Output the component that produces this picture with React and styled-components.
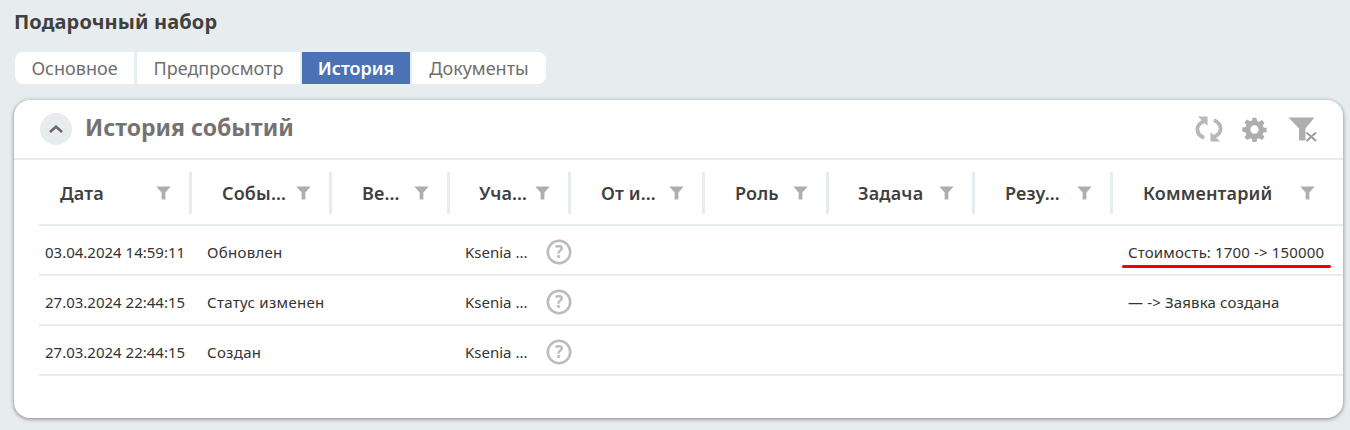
import React from "react";
import styled, { createGlobalStyle } from "styled-components";

const Global = createGlobalStyle`
  html, body { margin: 0; padding: 0; background: #e7ecef; }
  body { font-family: "Noto Sans", "Open Sans", sans-serif; color: #3f3f3f; width: 1350px; height: 430px; overflow: hidden; }
`;
const Page = styled.div`
  padding: 9px 7px 0 14px;
  display: flex;
  flex-direction: column;
`;
const Title = styled.h1`
  margin: 0;
  font-size: 20px;
  line-height: 25px;
  font-weight: 700;
  letter-spacing: 0.12px;
  color: #41403f;
`;
const Tabs = styled.div`
  display: flex;
  margin: 18px 0 16px 1px;
  height: 32px;
`;
const Tab = styled.div`
  display: flex;
  align-items: center;
  justify-content: center;
  width: ${p => p.$w}px;
  margin-right: ${p => p.$gap || 0}px;
  font-size: 18px;
  font-weight: ${p => (p.$active ? 600 : 400)};
  background: ${p => (p.$active ? "#4b72b5" : "#fff")};
  color: ${p => (p.$active ? "#fff" : "#706e6d")};
  border-radius: ${p => (p.$first ? "8px 0 0 8px" : p.$last ? "0 8px 8px 0" : "0")};
`;
const Card = styled.section`
  width: 1329px;
  height: 318px;
  background: #fff;
  border-radius: 16px;
  box-shadow: 0 1px 4px rgba(0, 0, 0, 0.45);
  position: relative;
  overflow: hidden;
`;
const CardHead = styled.header`
  height: 58px;
  border-bottom: 2px solid #e7ecef;
  display: flex;
  align-items: center;
  padding: 0 26px;
`;
const Collapse = styled.button`
  width: 32px;
  height: 32px;
  border: 0;
  padding: 0;
  border-radius: 50%;
  background: #e7ecef;
  display: flex;
  align-items: center;
  justify-content: center;
  margin-right: 13px;
`;
const CardTitle = styled.h2`
  margin: 0 0 5px;
  font-size: 23px;
  font-weight: 700;
  color: #757372;
  flex: 1;
`;
const Tools = styled.div`
  display: flex;
  align-items: center;
  margin-right: -1px;
`;
const ToolSlot = styled.span`
  display: flex;
  margin-left: ${p => p.$gap || 0}px;
`;
const Table = styled.div`
  margin-left: 25px;
`;
const columns = "153px 140px 118px 121px 134px 124px 146px 138px 1fr";
const HeadRow = styled.div`
  display: grid;
  grid-template-columns: ${columns};
  height: 64px;
  border-bottom: 2px solid #e7ecef;
  align-items: center;
`;
const HeadCell = styled.div`
  height: 42px;
  margin-top: 2px;
  border-right: ${p => (p.$last ? "0" : "3px solid #e7ecef")};
  display: flex;
  align-items: center;
  justify-content: space-between;
  padding: 0 ${p => (p.$last ? "28px" : "18px")} 0 ${p => p.$pad}px;
`;
const HeadText = styled.span`
  font-size: 18px;
  font-weight: 600;
  letter-spacing: 0.15px;
  color: #3f3f3f;
  white-space: nowrap;
`;
const Row = styled.div`
  display: grid;
  box-sizing: border-box;
  grid-template-columns: ${columns};
  height: 50px;
  padding-top: 3px;
  border-bottom: 2px solid #e7ecef;
  align-items: center;
  font-size: 15px;
  font-weight: 400;
  color: #333;
`;
const Cell = styled.div`
  padding-left: ${p => p.$pad}px;
  letter-spacing: ${p => p.$ls || 0}px;
  display: flex;
  align-items: center;
  justify-content: space-between;
  white-space: nowrap;
  min-width: 0;
`;
const Help = styled.span`
  display: flex;
  margin-right: -1px;
`;
const RedLine = styled.div`
  position: absolute;
  left: 1108px;
  top: 165px;
  width: 209px;
  height: 3px;
  border-radius: 2px;
  background: #ee0000;
`;

const FilterIcon = () => (
  <svg width="15" height="14" viewBox="0 0 15 14">
    <path d="M0.3 0.5h14.4L9.4 6.6V13.5H5.6V6.6z" fill="#aeaeae" />
  </svg>
);
const HelpIcon = () => (
  <svg width="26" height="26" viewBox="0 0 26 26">
    <circle cx="13" cy="13" r="11.2" fill="none" stroke="#bcbcbc" strokeWidth="2.6" />
    <text x="13" y="19" textAnchor="middle" fontSize="17" fontWeight="700" fontFamily="Noto Sans" fill="#bcbcbc">?</text>
  </svg>
);

const heads = [
  ["Дата", 21], ["Собы…", 30], ["Ве…", 30], ["Уча…", 29], ["От и…", 30],
  ["Роль", 30], ["Задача", 29], ["Резу…", 30], ["Комментарий", 30],
];
const rows = [
  ["03.04.2024 14:59:11", "Обновлен", "Стоимость: 1700 -> 150000"],
  ["27.03.2024 22:44:15", "Статус изменен", "— -> Заявка создана"],
  ["27.03.2024 22:44:15", "Создан", ""],
];

export default function App() {
  return (
    <Page>
      <Global />
      <Title>Подарочный набор</Title>
      <Tabs>
        <Tab $w={119} $gap={3} $first>Основное</Tab>
        <Tab $w={163} $gap={2}>Предпросмотр</Tab>
        <Tab $w={108} $gap={2} $active>История</Tab>
        <Tab $w={134} $last>Документы</Tab>
      </Tabs>
      <Card>
        <CardHead>
          <Collapse aria-label="Свернуть">
            <svg width="14" height="8" viewBox="0 0 14 8">
              <path d="M1 7 7 1.8 13 7" fill="none" stroke="#6a6a6a" strokeWidth="2.6" />
            </svg>
          </Collapse>
          <CardTitle>История событий</CardTitle>
          <Tools>
            <ToolSlot>
              <svg width="28" height="26" viewBox="0 0 28 26">
                <g fill="none" stroke="#b8b8b8" strokeWidth="3.8">
                  <path d="M9.5 5C5 6.8 2.4 9.6 2.4 13.2c0 3.8 2.6 7 6.8 8.6" />
                  <path d="M18.5 21C23 19.2 25.6 16.4 25.6 12.8c0-3.8-2.6-7-6.8-8.6" />
                </g>
                <path d="M3 0.5h9.5V10z" fill="#b8b8b8" />
                <path d="M25 25.5h-9.5V16z" fill="#b8b8b8" />
              </svg>
            </ToolSlot>
            <ToolSlot $gap={19}>
              <svg width="25" height="25" viewBox="0 0 26 26">
                <path fill="#aeaeae" fillRule="evenodd" d="M11 .8h4l.7 3.4 2 .8 2.9-1.9 2.8 2.8-1.9 2.9.8 2 3.4.7v4l-3.4.7-.8 2 1.9 2.9-2.8 2.8-2.9-1.9-2 .8-.7 3.4h-4l-.7-3.4-2-.8-2.9 1.9-2.8-2.8 1.9-2.9-.8-2L.3 15v-4l3.4-.7.8-2-1.9-2.9 2.8-2.8 2.9 1.9 2-.8zM13 8.6a4.4 4.4 0 1 0 0 8.8 4.4 4.4 0 0 0 0-8.8z" />
              </svg>
            </ToolSlot>
            <ToolSlot $gap={21}>
              <svg width="30" height="25" viewBox="0 0 30 25">
                <path d="M0.5 0.5h26L17.5 11.5V23.5H11V11.5z" fill="#aeaeae" />
                <path d="M18.5 15.5l9.5 8.5M28 15.5l-9.5 8.5" stroke="#9c9c9c" strokeWidth="2" />
              </svg>
            </ToolSlot>
          </Tools>
        </CardHead>
        <Table>
          <HeadRow>
            {heads.map(([t, p], i) => (
              <HeadCell key={i} $pad={p} $last={i === heads.length - 1}>
                <HeadText>{t}</HeadText>
                <FilterIcon />
              </HeadCell>
            ))}
          </HeadRow>
          {rows.map((r, i) => (
            <Row key={i}>
              <Cell $pad={6}>{r[0]}</Cell>
              <Cell $pad={15} $ls={0.3}>{r[1]}</Cell>
              <Cell />
              <Cell $pad={15}>
                <span>Ksenia ...</span>
                <Help><HelpIcon /></Help>
              </Cell>
              <Cell />
              <Cell />
              <Cell />
              <Cell />
              <Cell $pad={15} $ls={0.15}>{r[2]}</Cell>
            </Row>
          ))}
        </Table>
        <RedLine />
      </Card>
    </Page>
  );
}
